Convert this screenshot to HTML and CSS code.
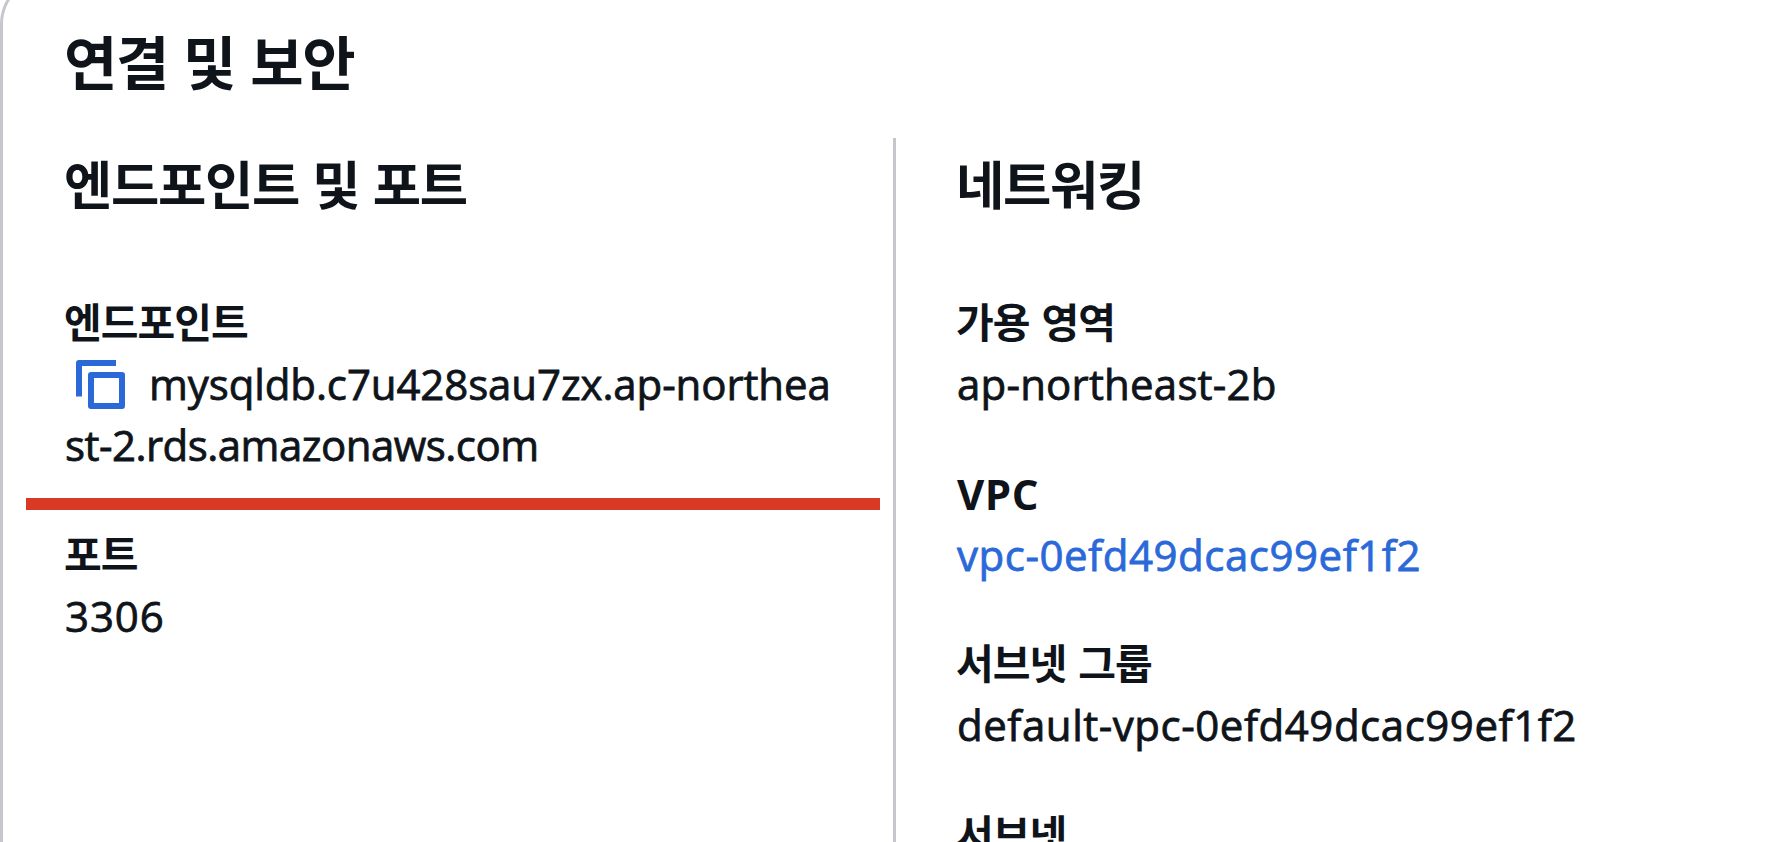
FILE: index.html
```
<!DOCTYPE html>
<html lang="ko"><head>
<meta charset="utf-8">
    <title>연결 및 보안</title>
<link rel="stylesheet" href="styles.css"></head><body>
    <div id="panel">
        <h2>연결 및 보안</h2>
        <div id="columns">

            <div class="column">
                <h3>엔드포인트 및 포트</h3>
                <dl>
                    <dt>엔드포인트</dt>
                    <dd class="endpoint"><svg class="copy" width="49" height="49" viewBox="0 0 49 49"><path d="M3 36.500V3H40"/><path d="M15 15H46V46H15Z"/></svg><span class="host">mysqldb.c7u428sau7zx.ap-northea</span><br><span class="host2">st-2.rds.amazonaws.com</span></dd>
                    <dt>포트</dt>
                    <dd class="port">3306</dd>
                </dl>
                <div id="underline"></div>
            </div>

            <div class="column">
                <h3>네트워킹</h3>
                <dl>
                    <dt>가용 영역</dt>
                    <dd class="zone">ap-northeast-2b</dd>
                    <dt class="latin">VPC</dt>
                    <dd class="vpc"><a href="#">vpc-0efd49dcac99ef1f2</a></dd>
                    <dt>서브넷 그룹</dt>
                    <dd class="group">default-vpc-0efd49dcac99ef1f2</dd>
                    <dt>서브넷</dt>
                </dl>
            </div>

        </div>
    </div>
</body></html>
```
FILE: styles.css
```
body{margin:0;padding:0;height:842px;overflow:hidden;background:#fff;color:#0f141a;
font-family:"Open Sans","Noto Sans CJK KR",sans-serif;font-size:42px;line-height:61px;}
h2, h3, dl, dd{margin:0;padding:0;}
a{color:#2b69d9;text-decoration:none;}

#panel{box-sizing:border-box;width:1860px;height:866px;margin-top:-24px;padding:48px 0 0 62px;overflow:hidden;
border:3px solid #c6c6cd;border-bottom:0;border-radius:48px 48px 0 0;}
h2{font-size:58px;line-height:72px;letter-spacing:-1.4px;word-spacing:1.5px;height:111px;text-indent:-1px;}
h3{font-size:52.500px;line-height:66px;letter-spacing:-1.3px;word-spacing:1px;height:154px;padding-top:14px;box-sizing:border-box;text-indent:-1px;}

#columns{display:flex;}
.column{position:relative;width:828px;height:704px;white-space:nowrap;}
.column + .column{border-left:3px solid #c6c6cd;padding-left:61px;}
dt{font-weight:bold;font-size:41px;letter-spacing:-1px;word-spacing:2.5px;text-indent:-1px;}
.latin{font-size:42px;letter-spacing:0.500px;text-indent:0;}
dd{margin-bottom:48.700px;-webkit-text-stroke:0.800px;}

.copy{width:49px;height:49px;margin:0 24px 0 11px;vertical-align:-9px;fill:none;stroke:#2b69d9;stroke-width:6;stroke-linejoin:round;}
.endpoint{height:122px;}
.host{letter-spacing:-0.100px;}
.host2{letter-spacing:-0.520px;}
.zone{letter-spacing:0.200px;}
.vpc, .group{letter-spacing:0.530px;}
.port{letter-spacing:0.900px;}

/* red marker under the endpoint */
#underline{position:absolute;left:-39px;top:360px;width:854px;height:12px;background:#d93a26;}
```
